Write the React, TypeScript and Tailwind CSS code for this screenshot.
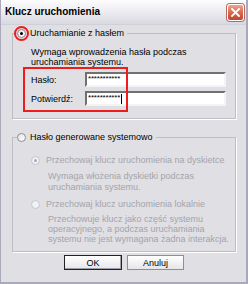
import React from 'react';

type RadioProps = { checked?: boolean; disabled?: boolean };

function Radio({ checked = false, disabled = false }: RadioProps) {
  return (
    <span
      className={
        'flex h-[9px] w-[9px] shrink-0 items-center justify-center rounded-full border ' +
        (disabled
          ? 'border-[#c4c4cc] bg-[#f2f2f4]'
          : 'border-[#8c8c96] bg-linear-to-br from-[#e4e4ea] to-white')
      }
    >
      {checked && (
        <span className={'h-[3px] w-[3px] rounded-full ' + (disabled ? 'bg-[#a8a8b0]' : 'bg-black')} />
      )}
    </span>
  );
}

function PasswordInput({ caret = false }: { caret?: boolean }) {
  return (
    <div className="flex h-[15px] w-[141px] items-start border-2 border-t-[#707070] border-l-[#707070] border-r-[#f4f4f6] border-b-[#f4f4f6] bg-white pl-[1px]">
      <span className="text-[8px] leading-[9px] tracking-[-0.2px]">***********</span>
      {caret && <span className="ml-[1px] mt-[1px] h-[10px] w-[1px] bg-black" />}
    </div>
  );
}

export default function App() {
  return (
    <div className="h-[284px] w-[248px] overflow-hidden whitespace-nowrap border-l border-r-2 border-b-2 border-[#a9a9bb] bg-[#e0dfe3] font-['Liberation_Sans',Arial,sans-serif] text-[9px] leading-[10px] text-black">
      {/* pasek tytułu */}
      <div className="flex h-[25px] items-center justify-between border-b border-[#d0d0d8] bg-linear-to-b from-[#fdfdfe] via-[#ececf1] to-[#d8d8e0] pl-[4px] pr-[2px]">
        <span className="text-[10px] font-bold">Klucz uruchomienia</span>
        <div className="flex h-[17px] w-[17px] items-center justify-center rounded-[3px] border border-white bg-linear-to-b from-[#efa48e] via-[#d96a52] to-[#c0442c] shadow-[0_0_0_1px_#b86a5e]">
          <svg width="9" height="9" viewBox="0 0 9 9">
            <path d="M1 1 L8 8 M8 1 L1 8" stroke="white" strokeWidth="1.8" strokeLinecap="square" />
          </svg>
        </div>
      </div>

      <div className="pl-[11px] pr-[10px] pt-[3px]">
        {/* grupa 1 */}
        <fieldset className="border border-[#bdbdc5] shadow-[1px_1px_0_#fff]">
          <legend className="ml-[4px] bg-[#e0dfe3] pr-[3px]">
            <span className="flex items-center gap-[4px]">
              <span className="relative">
                <Radio checked />
                <span className="absolute -left-[3px] -top-[3px] h-[15px] w-[15px] rounded-full border-2 border-[#ee1c1c]" />
              </span>
              <span>Uruchamianie z hasłem</span>
            </span>
          </legend>
          <div className="pb-[12px] pl-[18px] pr-[9px] pt-[9px]">
            <p>
              Wymaga wprowadzenia hasła podczas
              <br />
              uruchamiania systemu.
            </p>
            <div className="relative mt-[5px] flex flex-col gap-[4px]">
              <div className="flex items-center">
                <span className="w-[54px]">Hasło:</span>
                <PasswordInput />
              </div>
              <div className="flex items-center">
                <span className="w-[54px]">Potwierdź:</span>
                <PasswordInput caret />
              </div>
              <div className="absolute -left-[8px] -top-[5px] h-[45px] w-[105px] border-2 border-[#ee1c1c]" />
            </div>
          </div>
        </fieldset>

        {/* grupa 2 */}
        <fieldset className="mt-[13px] border border-[#bdbdc5] shadow-[1px_1px_0_#fff]">
          <legend className="ml-[4px] bg-[#e0dfe3] pr-[3px]">
            <span className="flex items-center gap-[4px]">
              <Radio />
              <span>Hasło generowane systemowo</span>
            </span>
          </legend>
          <div className="pb-[7px] pl-[18px] pr-[6px] pt-[13px] text-[#a4a4ac]">
            <div className="flex items-center gap-[6px]">
              <Radio checked disabled />
              <span>Przechowaj klucz uruchomienia na dyskietce</span>
            </div>
            <p className="mt-[6px] pl-[17px] leading-[10.5px]">
              Wymaga włożenia dyskietki podczas
              <br />
              uruchamiania systemu.
            </p>
            <div className="mt-[7px] flex items-center gap-[6px]">
              <Radio disabled />
              <span>Przechowaj klucz uruchomienia lokalnie</span>
            </div>
            <p className="mt-[5px] pl-[17px] leading-[10px]">
              Przechowuje klucz jako część systemu
              <br />
              operacyjnego, a podczas uruchamiania
              <br />
              systemu nie jest wymagana żadna interakcja.
            </p>
          </div>
        </fieldset>

        <div className="mt-[3px] flex justify-center gap-[5px]">
          <button className="flex h-[15px] w-[58px] items-center justify-center border border-[#222] bg-linear-to-b from-white to-[#e6e6ea] shadow-[inset_-1px_-1px_0_#a0a0a8]">
            OK
          </button>
          <button className="flex h-[15px] w-[57px] items-center justify-center border border-[#8e8e96] bg-linear-to-b from-white to-[#e6e6ea]">
            Anuluj
          </button>
        </div>
      </div>
    </div>
  );
}
